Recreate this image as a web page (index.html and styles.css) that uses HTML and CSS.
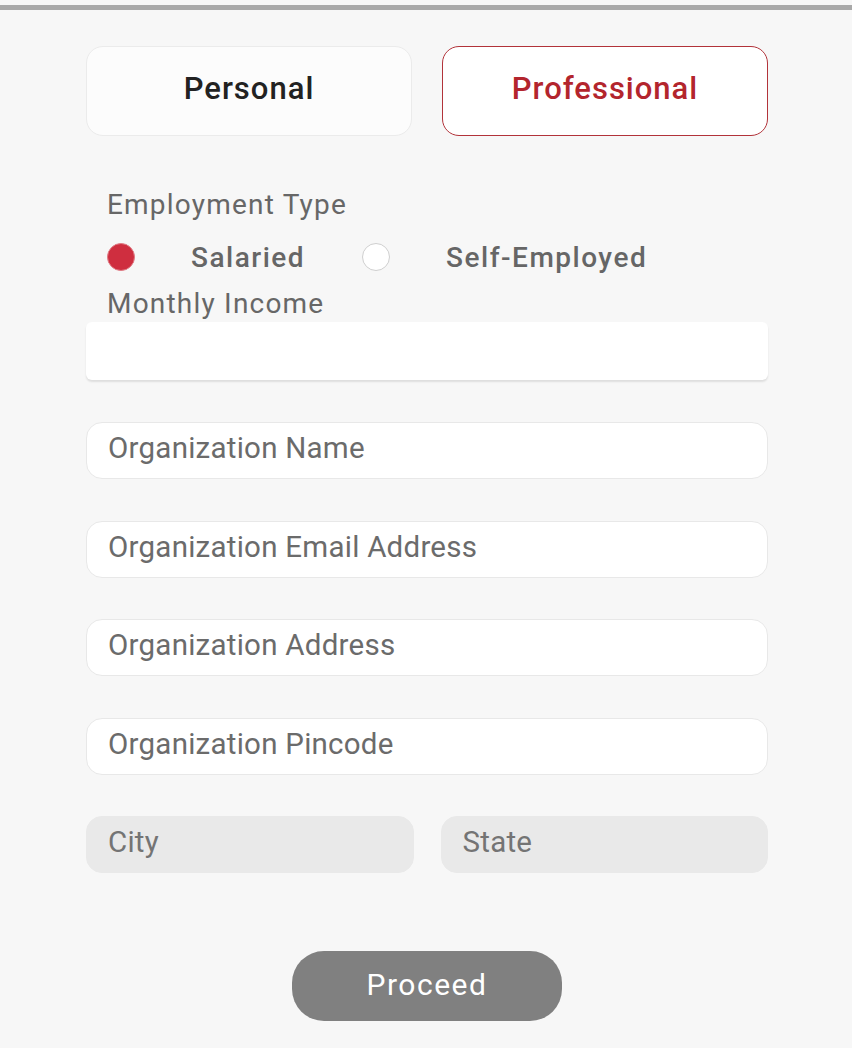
FILE: index.html
```html
<!DOCTYPE html>
<html>
<head>
<meta charset="utf-8">
<link rel="stylesheet" href="styles.css">
</head>
<body>
<div class="topbar"></div>
<main class="form">
  <div class="tabs">
    <div class="tab">Personal</div>
    <div class="tab active">Professional</div>
  </div>
  <div class="section">
    <div class="label">Employment Type</div>
    <div class="radios">
      <div class="radio checked"></div>
      <span class="radio-text salaried">Salaried</span>
      <div class="radio"></div>
      <span class="radio-text">Self-Employed</span>
    </div>
    <div class="label income-label">Monthly Income</div>
    <div class="income"></div>
  </div>
  <div class="fields">
    <div class="field">Organization Name</div>
    <div class="field">Organization Email Address</div>
    <div class="field">Organization Address</div>
    <div class="field">Organization Pincode</div>
    <div class="pair">
      <div class="field disabled">City</div>
      <div class="field disabled">State</div>
    </div>
  </div>
  <div class="actions">
    <button class="proceed">Proceed</button>
  </div>
</main>
</body>
</html>
```
FILE: styles.css
```css
* { box-sizing: border-box; }
html, body { margin: 0; padding: 0; }
body {
  background: #f7f7f7;
  font-family: Roboto, "Noto Sans", sans-serif;
  width: 852px;
  height: 1048px;
  overflow: hidden;
}
.topbar {
  margin-top: 5px;
  height: 5px;
  background: #a9a9a9;
}
.form {
  padding: 36px 84px 0 86px;
}
.tabs {
  display: flex;
  gap: 30px;
}
.tab {
  flex: 1;
  height: 90px;
  border: 1.5px solid #ebebeb;
  border-radius: 17px;
  background: #fcfcfc;
  display: flex;
  align-items: center;
  justify-content: center;
  padding-bottom: 5px;
  font-size: 31px;
  font-weight: 500;
  color: #222;
  letter-spacing: 1px;
}
.tab.active {
  border-color: #b2333a;
  background: #fff;
  color: #b3252d;
}
.section {
  margin-top: 52px;
}
.label {
  padding-left: 21px;
  font-size: 28px;
  color: #676767;
  line-height: 34px;
  letter-spacing: 1.2px;
}
.radios {
  display: flex;
  align-items: center;
  padding-left: 21px;
  height: 50px;
  margin-top: 10px;
}
.radio {
  width: 28px;
  height: 28px;
  border-radius: 50%;
  border: 1.5px solid #cfcfcf;
  background: #fff;
}
.radio.checked {
  background: #cf2e3f;
  border: 1.5px solid #e07b85;
}
.radio-text {
  font-size: 28px;
  font-weight: 500;
  color: #666;
  margin-left: 56px;
  letter-spacing: 1.5px;
}
.salaried { margin-right: 57px; }
.income-label { margin-top: 5px; }
.income {
  margin-top: 1px;
  height: 58px;
  background: #fff;
  border-radius: 6px;
  box-shadow: 0 2px 2px rgba(0,0,0,0.1);
}
.fields {
  margin-top: 42px;
  display: flex;
  flex-direction: column;
  gap: 41.5px;
}
.field {
  height: 57px;
  background: #fff;
  border: 1.5px solid #e8e8e8;
  border-radius: 16px;
  padding-left: 21px;
  padding-bottom: 5px;
  display: flex;
  align-items: center;
  font-size: 29.5px;
  letter-spacing: 0.25px;
  color: #6b6b6b;
}
.pair {
  display: flex;
  gap: 27px;
}
.pair .field {
  flex: 1;
  background: #e9e9e9;
  border-color: #e9e9e9;
  color: #747474;
}
.actions {
  display: flex;
  justify-content: center;
  margin-top: 78px;
}
.proceed {
  width: 270px;
  height: 70px;
  border: none;
  border-radius: 32px;
  background: #808080;
  color: #fff;
  font-family: inherit;
  font-size: 30px;
  letter-spacing: 1.5px;
  padding: 0 0 4px 0;
}
```
